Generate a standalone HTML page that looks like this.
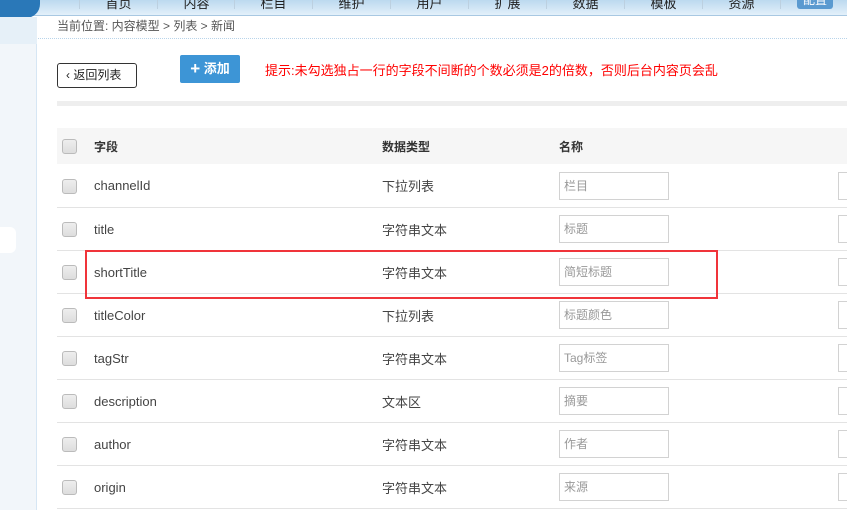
<!DOCTYPE html>
<html><head><meta charset="utf-8"><style>
*{margin:0;padding:0;box-sizing:border-box}
body{width:847px;height:510px;overflow:hidden;background:#fff;font-family:"Liberation Sans","Noto Sans CJK SC",sans-serif;font-size:13px;color:#444;position:relative}
.nav{position:absolute;left:0;top:0;width:847px;height:16px;background:linear-gradient(#bcd9ef,#e3f0fa);border-bottom:1px solid #a8c8e2}
.navl{position:absolute;left:0;top:0;width:40px;height:18px;background:#2a78b8;border-bottom-right-radius:14px}
.nav span{position:absolute;top:-7px;font-size:13px;color:#222;width:78px;text-align:center;border-left:1px solid #bcd0e0;height:16px}
.btn8{position:absolute;left:797px;top:-4px;width:36px;height:13px;background:#5a9ad0;border-radius:3px;color:#fff;font-size:12px;text-align:center;line-height:8px}
.side{position:absolute;left:0;top:17px;width:37px;height:493px;background:#f2f6fa;border-right:1px solid #d6e6f4}
.side .a{position:absolute;left:0;top:0;width:37px;height:27px;background:#e6f0f8}
.side .b{position:absolute;left:0;top:210px;width:16px;height:26px;background:#fff;border-radius:0 6px 6px 0}
.crumb{position:absolute;left:57px;top:17px;font-size:12px;color:#555}
.dot{position:absolute;left:38px;top:38px;width:809px;border-top:1px dotted #b8d4ea}
.back{position:absolute;left:57px;top:63px;width:80px;height:25px;border:1px solid #333;border-radius:3px;font-size:12px;line-height:23px;padding-left:8px;color:#222}
.add{position:absolute;left:180px;top:55px;width:60px;height:28px;background:#3d95d6;border-radius:2px;color:#fff;font-size:13px;font-weight:bold;line-height:28px;text-align:center}
.add b{font-size:17px;vertical-align:-1px}
.tip{position:absolute;left:265px;top:60px;color:#f00;font-size:13px}
.bar{position:absolute;left:57px;top:101px;width:790px;height:5px;background:#eee}
table{position:absolute;left:57px;top:128px;width:790px;border-collapse:collapse}
td{height:43px;border-bottom:1px solid #e3e3e3;vertical-align:middle;padding-top:1px}
tr.h td{height:36px;background:#f6f6f6;font-weight:bold;border:none;font-size:12px;color:#333}
.cb{display:inline-block;width:15px;height:15px;border:1px solid #bbb;border-radius:3px;background:linear-gradient(#eee,#ddd);margin-left:5px;vertical-align:middle}
.in{display:inline-block;width:110px;height:28px;border:1px solid #d2d2d2;color:#999;font-size:12px;line-height:26px;padding-left:4px}
.red{position:absolute;left:85px;top:250px;width:633px;height:49px;border:2px solid #f0343a}
.rc{position:absolute;left:838px;width:9px;height:28px;border:1px solid #d2d2d2;border-right:none}
</style></head><body>
<div class="nav"><div class="navl"></div>
<span style="left:79px">首页</span><span style="left:157px">内容</span><span style="left:234px">栏目</span><span style="left:312px">维护</span><span style="left:390px">用户</span><span style="left:468px">扩展</span><span style="left:546px">数据</span><span style="left:624px">模板</span><span style="left:702px">资源</span><span style="left:780px;width:1px"></span>
<div class="btn8">配置</div></div>
<div class="side"><div class="a"></div><div class="b"></div></div>
<div class="crumb">当前位置: 内容模型 &gt; 列表 &gt; 新闻</div>
<div class="dot"></div>
<div class="back">‹ 返回列表</div>
<div class="add"><b>+</b> 添加</div>
<div class="tip">提示:未勾选独占一行的字段不间断的个数必须是2的倍数，否则后台内容页会乱</div>
<div class="bar"></div>
<table>
<colgroup><col style="width:37px"><col style="width:288px"><col style="width:177px"><col></colgroup>
<tr class="h"><td><span class="cb"></span></td><td>字段</td><td>数据类型</td><td>名称</td></tr>
<tr><td><span class="cb"></span></td><td>channelId</td><td>下拉列表</td><td><span class="in">栏目</span></td></tr>
<tr><td><span class="cb"></span></td><td>title</td><td>字符串文本</td><td><span class="in">标题</span></td></tr>
<tr><td><span class="cb"></span></td><td>shortTitle</td><td>字符串文本</td><td><span class="in">简短标题</span></td></tr>
<tr><td><span class="cb"></span></td><td>titleColor</td><td>下拉列表</td><td><span class="in">标题颜色</span></td></tr>
<tr><td><span class="cb"></span></td><td>tagStr</td><td>字符串文本</td><td><span class="in">Tag标签</span></td></tr>
<tr><td><span class="cb"></span></td><td>description</td><td>文本区</td><td><span class="in">摘要</span></td></tr>
<tr><td><span class="cb"></span></td><td>author</td><td>字符串文本</td><td><span class="in">作者</span></td></tr>
<tr><td><span class="cb"></span></td><td>origin</td><td>字符串文本</td><td><span class="in">来源</span></td></tr>
</table>
<div class="red"></div>
<div class="rc" style="top:172px"></div><div class="rc" style="top:215px"></div><div class="rc" style="top:258px"></div><div class="rc" style="top:301px"></div><div class="rc" style="top:344px"></div><div class="rc" style="top:387px"></div><div class="rc" style="top:430px"></div><div class="rc" style="top:473px"></div>
</body></html>
